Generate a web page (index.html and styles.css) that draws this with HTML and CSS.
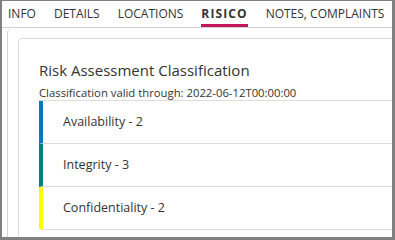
FILE: index.html
```html
<!DOCTYPE html>
<html>
<head>
<meta charset="utf-8">
<link rel="stylesheet" href="styles.css">
</head>
<body>
<div class="frame">
  <nav class="tabs">
    <span class="tab">INFO</span>
    <span class="tab">DETAILS</span>
    <span class="tab">LOCATIONS</span>
    <span class="tab active">RISICO</span>
    <span class="tab">NOTES, COMPLAINTS</span>
  </nav>
  <div class="panel">
    <div class="card">
      <h2 class="title">Risk Assessment Classification</h2>
      <p class="valid">Classification valid through: 2022-06-12T00:00:00</p>
      <ul class="list">
        <li class="item blue">Availability - 2</li>
        <li class="item teal">Integrity - 3</li>
        <li class="item yellow">Confidentiality - 2</li>
      </ul>
    </div>
  </div>
</div>
</body>
</html>
```
FILE: styles.css
```css
html, body {
  margin: 0;
  padding: 0;
}
body {
  font-family: "Open Sans", "Noto Sans", sans-serif;
  color: #333;
  background: #fff;
}
.frame {
  width: 395px;
  height: 240px;
  box-sizing: border-box;
  border-style: solid;
  border-color: #808080;
  border-width: 1px 3px 3px 2px;
  overflow: hidden;
  background: #fff;
}
.tabs {
  display: flex;
  gap: 18px;
  padding-left: 6px;
  height: 26px;
  border-bottom: 1px solid #cfcfcf;
  white-space: nowrap;
}
.tab {
  font-size: 12px;
  line-height: 26px;
  box-sizing: border-box;
  height: 26px;
  color: #333;
}
.tab.active {
  font-weight: bold;
  letter-spacing: 1.1px;
  border-bottom: 3px solid #c2185b;
}
.panel {
  margin-left: 5px;
  width: 420px;
  border: 1px solid #d4d4d4;
  border-right: none;
  border-top: none;
  border-top-left-radius: 5px;
  height: 300px;
  padding: 10px 0 0 10px;
}
.card {
  border: 1px solid #dcdcdc;
  border-top-left-radius: 4px;
  padding: 20px 0 0 20px;
  height: 300px;
}
.title {
  margin: 0;
  font-weight: normal;
  font-size: 15px;
  line-height: 22px;
}
.valid {
  margin: 5px 0 0 0;
  font-size: 11.3px;
  line-height: 14px;
}
.list {
  list-style: none;
  margin: 0;
  padding: 0;
  border-top: 1px solid #dcdcdc;
}
.item {
  height: 42px;
  line-height: 42px;
  border-bottom: 1px solid #dcdcdc;
  border-left: 4px solid #0079c1;
  padding-left: 20px;
  font-size: 12.5px;
}
.item.teal { border-left-color: #00807f; }
.item.yellow { border-left-color: #ffff00; border-bottom-left-radius: 3px; }
```
